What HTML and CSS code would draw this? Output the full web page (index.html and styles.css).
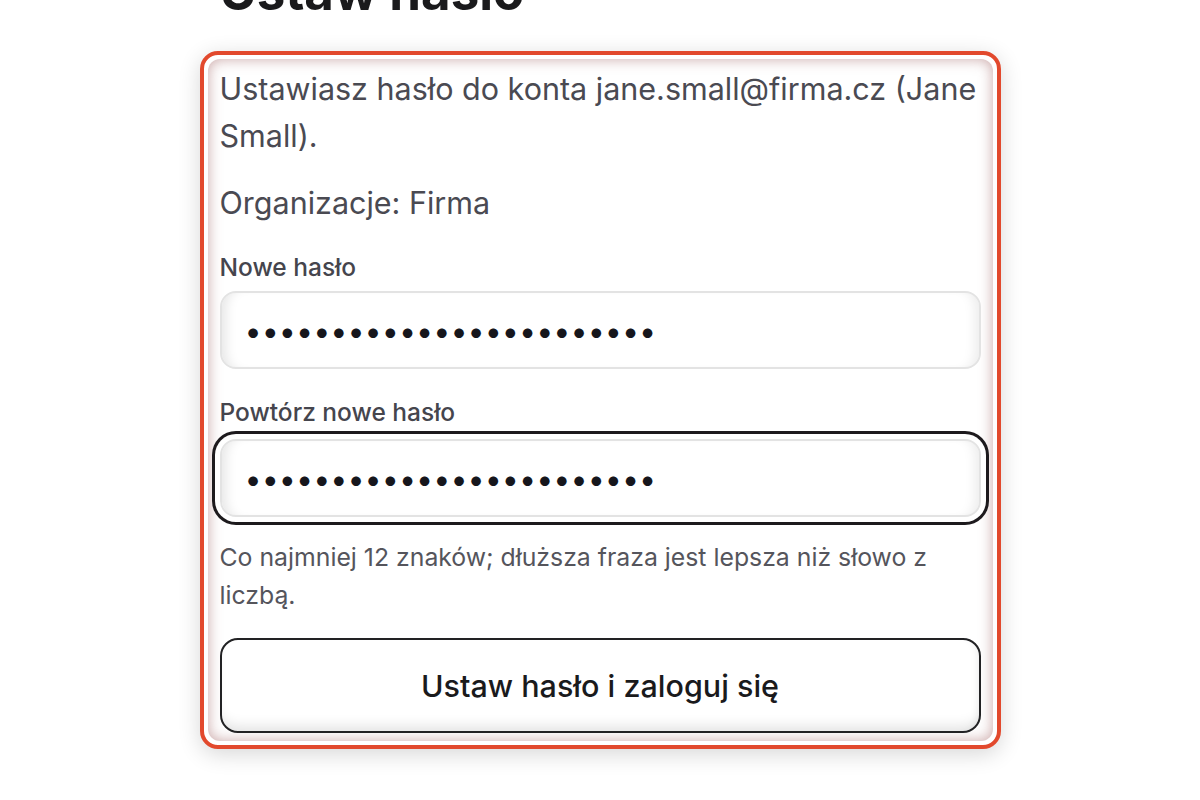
FILE: index.html
```html
<!DOCTYPE html>
<html lang="pl">
<head>
<meta charset="utf-8">
<title>Ustaw hasło</title>
<link rel="stylesheet" href="styles.css">
</head>
<body>
<main class="page">
  <h1 class="title">Ustaw hasło</h1>
  <form class="card">
    <div class="card-inner">
      <p class="intro">Ustawiasz hasło do konta jane.small@firma.cz (Jane Small).</p>
      <p class="org">Organizacje: Firma</p>
      <label class="field">
        <span class="label">Nowe hasło</span>
        <input class="input" type="password" value="abcdefghijklmnopqrstuvwx">
      </label>
      <label class="field">
        <span class="label">Powtórz nowe hasło</span>
        <input class="input is-focused" type="password" value="abcdefghijklmnopqrstuvwx">
      </label>
      <p class="hint">Co najmniej 12 znaków; dłuższa fraza jest lepsza niż słowo z liczbą.</p>
      <button class="btn" type="button">Ustaw hasło i zaloguj się</button>
    </div>
  </form>
</main>
</body>
</html>
```
FILE: styles.css
```css
* { box-sizing: border-box; }
html, body { margin: 0; padding: 0; background: #ffffff; }
body {
  font-family: Inter, "Noto Sans", "Liberation Sans", sans-serif;
  color: #4a4a52;
}
.page {
  width: 801px;
  margin: 0 auto;
  padding: 1px 0 60px;
}
.title {
  margin: -38px 0 30px 20px;
  font-size: 51px;
  line-height: 58px;
  font-weight: 700;
  color: #1a1a1c;
}
.card {
  border: 4px solid #e2492d;
  border-radius: 18px;
  padding: 4px;
  background: #ffffff;
  box-shadow: 0 5px 22px rgba(0, 0, 0, 0.16);
}
.card-inner {
  border-radius: 12px;
  padding: 6px 12px 8px;
  box-shadow: inset 0 0 14px rgba(150, 80, 80, 0.5);
  display: flex;
  flex-direction: column;
}
.intro, .org {
  margin: 0;
  font-size: 30.5px;
  line-height: 47px;
}
.org { margin-top: 20px; }
.field {
  display: flex;
  flex-direction: column;
  margin-top: 23px;
}
.field + .field { margin-top: 25px; }
.label {
  font-size: 24.5px;
  line-height: 36px;
  font-weight: 500;
  color: #45454d;
  margin-bottom: 6px;
}
.input {
  display: block;
  width: 100%;
  height: 78px;
  border: 2px solid #e3e3e3;
  border-radius: 16px;
  padding: 0 23px;
  font-family: Inter, "Noto Sans", sans-serif;
  font-size: 30.5px;
  color: #16161c;
  background: #ffffff;
  outline: none;
  box-shadow: inset 12px 0 12px -8px rgba(0, 0, 0, 0.1), inset -12px 0 12px -8px rgba(0, 0, 0, 0.08);
}
.input.is-focused {
  margin-top: 3px;
  box-shadow: 0 0 0 5px #ffffff, 0 0 0 8px #1d1a1d,
    inset 12px 0 12px -8px rgba(0, 0, 0, 0.1), inset -12px 0 12px -8px rgba(0, 0, 0, 0.08);
}
.hint {
  margin: 21px 0 0;
  font-size: 24.8px;
  line-height: 38px;
  color: #55555c;
}
.btn {
  margin-top: 24px;
  width: 100%;
  height: 95px;
  border: 2px solid #222224;
  border-radius: 18px;
  background: #ffffff;
  font-family: Inter, "Noto Sans", sans-serif;
  font-size: 30.5px;
  font-weight: 500;
  color: #1a1a1c;
  box-shadow: inset 0 -12px 14px -8px rgba(0, 0, 0, 0.12), inset -8px 0 10px -8px rgba(0, 0, 0, 0.08);
  cursor: pointer;
}
```
